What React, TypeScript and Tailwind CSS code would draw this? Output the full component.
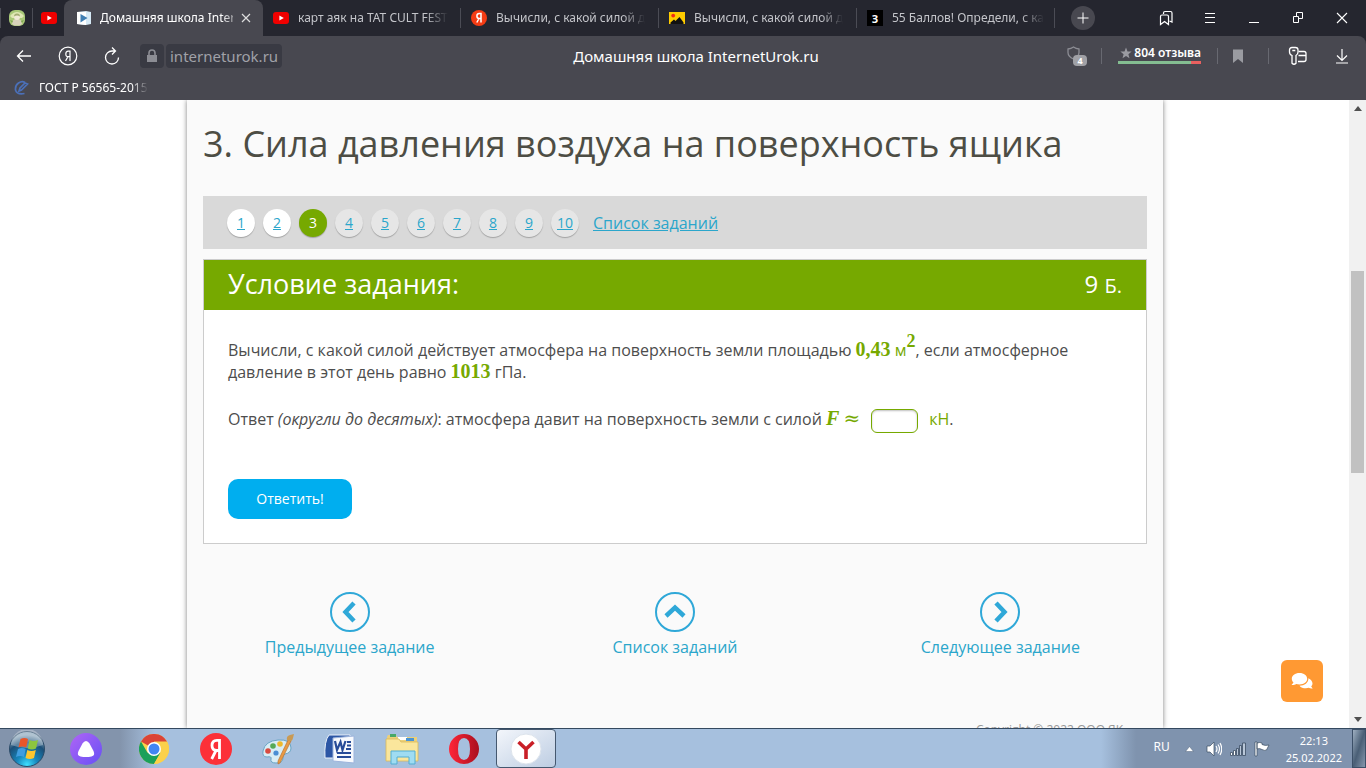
import React from "react";

const UI = "font-['Noto_Sans','Open_Sans',sans-serif]";

function YouTubeIcon() {
  return (
    <svg width="16" height="16" viewBox="0 0 16 16" aria-hidden="true" className="shrink-0">
      <rect y="2" width="16" height="12" rx="3" fill="#f00000" />
      <path d="M6.4 5.4v5.2L10.8 8z" fill="#fff" />
    </svg>
  );
}

function MascotIcon() {
  return (
    <svg width="16" height="16" viewBox="0 0 16 16" aria-hidden="true" className="shrink-0">
      <rect width="16" height="16" rx="6" fill="#a9c978" />
      <path d="M1 6Q8-2 15 6L13 8H3z" fill="#dfe8b4" />
      <path d="M3 14q0-5 5-5t5 5l-2 1.500H5z" fill="#d8d2bc" />
      <circle cx="8" cy="7" r="3" fill="#f0ead6" />
      <path d="M5 6.500q0-3 3-3t3 3q-3-2-6 0z" fill="#a3ad72" />
      <path d="M1 10l3 1-1 2zM15 10l-3 1 1 2z" fill="#7fa552" />
    </svg>
  );
}

function SchoolIcon() {
  return (
    <svg width="16" height="16" viewBox="0 0 16 16" aria-hidden="true" className="shrink-0">
      <path d="M1 2l9-1 5 1v12l-5 1-9-1z" fill="#d6eaf6" />
      <path d="M1 2l9 0v13l-9-1z" fill="#fff" />
      <path d="M4.500 4v8.500L11.500 8z" fill="#3f7fb3" />
    </svg>
  );
}

function YandexRound() {
  return (
    <svg width="16" height="16" viewBox="0 0 16 16" aria-hidden="true" className="shrink-0">
      <circle cx="8" cy="8" r="8" fill="#f43c14" />
      <path d="M10 12.500v-9H8.300Q5.900 3.500 5.900 6t2.300 2.500H10M8 8.500l-2.200 4" fill="none" stroke="#fff" strokeWidth="1.500" />
    </svg>
  );
}

function PictureIcon() {
  return (
    <svg width="16" height="16" viewBox="0 0 16 16" aria-hidden="true" className="shrink-0">
      <path d="M0 2h16v12H0z" fill="#fc0" />
      <path d="M1.500 14v-1.500L5 9.500l1.500 1.500L10.500 7l4 5.500V14z" fill="#111" />
      <circle cx="4.200" cy="5.600" r="1.900" fill="#f22a17" />
    </svg>
  );
}

function ZnanijaIcon() {
  return (
    <span className="flex size-4 shrink-0 items-center justify-center bg-black text-[11px] font-bold leading-none text-white">З</span>
  );
}

const backgroundTabs = [
  { title: "карт аяк на TAT CULT FEST", icon: <YouTubeIcon /> },
  { title: "Вычисли, с какой силой д", icon: <YandexRound /> },
  { title: "Вычисли, с какой силой д", icon: <PictureIcon /> },
  { title: "55 Баллов! Определи, с ка", icon: <ZnanijaIcon /> },
];

const fade = "[mask-image:linear-gradient(to_right,black_85%,transparent)]";

function TabStrip() {
  return (
    <div className="flex h-9 items-center bg-[#25262f] text-xs text-[#c4c5ca]">
      <button aria-label="Закреплённая вкладка" className="flex h-5 w-8 items-center justify-center border-l border-[#4b4c55]">
        <MascotIcon />
      </button>
      <button aria-label="YouTube" className="flex h-5 w-8 items-center justify-center border-l border-[#4b4c55]">
        <YouTubeIcon />
      </button>
      <div className="flex h-9 min-w-0 max-w-[199px] flex-1 items-center gap-2 rounded-t-lg bg-[#484850] pl-3 pr-3 text-white">
        <SchoolIcon />
        <span className="min-w-0 flex-1 overflow-hidden whitespace-nowrap">
          <span className={fade}>Домашняя школа Intern</span>
        </span>
        <button aria-label="Закрыть вкладку">
          <svg width="10" height="10" viewBox="0 0 10 10" stroke="#ddd" strokeWidth="1.200"><path d="M1 1l8 8M9 1l-8 8" /></svg>
        </button>
      </div>
      {backgroundTabs.map((tab, i) => (
        <button key={i} className="flex h-5 min-w-0 max-w-[198px] flex-1 items-center gap-[9px] border-r border-[#4b4c55] pl-[10px] pr-2 text-left">
          {tab.icon}
          <span className="min-w-0 flex-1 overflow-hidden whitespace-nowrap">
            <span className={fade}>{tab.title}</span>
          </span>
        </button>
      ))}
      <button aria-label="Новая вкладка" className="ml-4 flex size-6 shrink-0 items-center justify-center rounded-full bg-[#484850]">
        <svg width="12" height="12" viewBox="0 0 12 12" stroke="#fff" strokeWidth="1"><path d="M6 .500v11M.500 6h11" /></svg>
      </button>
      <div className="ml-auto flex items-center gap-7 pr-4 text-white">
        <button aria-label="Закладки">
          <svg width="16" height="16" viewBox="0 0 16 16" fill="none" stroke="currentColor" strokeWidth="1.200">
            <path d="M5.500 4V3q0-1.500 1.500-1.500h5.500Q14 1.500 14 3v9l-2.500-1" />
            <path d="M2.500 14.500V6.500Q2.500 5 4 5h5q1.500 0 1.500 1.500v8l-4-3z" />
          </svg>
        </button>
        <button aria-label="Меню">
          <svg width="16" height="16" viewBox="0 0 16 16" stroke="currentColor"><path d="M3 3.500h10M3 7.500h10M3 12.500h10" /></svg>
        </button>
        <button aria-label="Свернуть">
          <svg width="16" height="16" viewBox="0 0 16 16" stroke="currentColor"><path d="M3 12.500h10" /></svg>
        </button>
        <button aria-label="Восстановить">
          <svg width="16" height="16" viewBox="0 0 16 16" fill="none" stroke="currentColor"><path d="M6.500 6.500v-4h6v6h-4M3.500 6.500h5v6h-5z" /></svg>
        </button>
        <button aria-label="Закрыть">
          <svg width="16" height="16" viewBox="0 0 16 16" stroke="currentColor" strokeWidth="1.100"><path d="M3 3l10 10M13 3L3 13" /></svg>
        </button>
      </div>
    </div>
  );
}

function Toolbar() {
  return (
    <div className="bg-[#25262f]">
      <div className="grid h-10 grid-cols-[1fr_auto_1fr] items-center rounded-t-lg bg-[#484850] text-white">
        <div className="flex items-center pl-4">
          <button aria-label="Назад">
            <svg width="16" height="16" viewBox="0 0 16 16" fill="none" stroke="currentColor" strokeWidth="1.300"><path d="M15 8H1.500M7 2.500L1.500 8 7 13.500" /></svg>
          </button>
          <button aria-label="Яндекс" className="ml-[26px]">
            <svg width="20" height="20" viewBox="0 0 20 20" fill="none" stroke="currentColor" strokeWidth="1.200">
              <circle cx="10" cy="10" r="8.800" />
              <path d="M12 15V5.200h-1.700Q7.800 5.200 7.800 8t2.500 2.600H12M10 10.600L7.500 15" />
            </svg>
          </button>
          <button aria-label="Обновить" className="ml-[26px]">
            <svg width="16" height="18" viewBox="0 0 16 18" fill="none" stroke="currentColor" strokeWidth="1.300">
              <path d="M14.500 10.500A6.500 6.500 0 1 1 8 4h3.500M8 .500L11.500 4 8 7.500" />
            </svg>
          </button>
          <button aria-label="Защищённое соединение" className="ml-5 flex h-6 w-6 items-center justify-center rounded bg-[#393a43]">
            <svg width="12" height="14" viewBox="0 0 12 14"><path d="M1 6h10v7H1z" fill="#8c8d94" /><path d="M3 6.500V4a3 3 0 0 1 6 0v2.500" fill="none" stroke="#8c8d94" strokeWidth="1.600" /></svg>
          </button>
          <button className="ml-[2px] h-6 rounded bg-[#393a43] px-1 text-[15px] leading-6 text-[#a0a1a8]">interneturok.ru</button>
        </div>
        <h1 className="pl-[26px] text-[15px]">Домашняя школа InternetUrok.ru</h1>
        <div className="flex items-center justify-end pr-4">
          <button aria-label="Защита: 4" className="relative flex h-5 w-5 items-start">
            <svg width="13" height="14" viewBox="0 0 13 14" fill="none" stroke="#8c8d94" strokeWidth="1.300"><path d="M6.500 1Q9 2.800 12 3v3.500q0 4-5.500 6.500Q1 10.500 1 6.500V3q3-.200 5.500-2z" /></svg>
            <span className="absolute left-[6px] top-[9px] h-[11px] w-[14px] rounded-sm bg-[#a0a1a6] text-center text-[9px] font-bold leading-[11px]">4</span>
          </button>
          <span className="ml-[14px] h-4 w-px bg-[#686971]" />
          <button className="ml-4 w-[83px] pb-[3px]">
            <span className="flex items-center justify-between whitespace-nowrap text-xs font-semibold leading-4">
              <svg width="12" height="12" viewBox="0 0 12 12" fill="#9a9ba1" className="ml-[2px]"><path d="M6 .500l1.500 3.900 4.100.200-3.200 2.600 1.100 4L6 9l-3.500 2.200 1.100-4L.400 4.600l4.100-.200z" /></svg>
              804 отзыва
            </span>
            <span className="flex h-[3px]"><i className="flex-1 bg-[#84bd91]" /><i className="w-[10px] bg-[#e9605f]" /></span>
          </button>
          <span className="ml-4 h-4 w-px bg-[#686971]" />
          <button aria-label="В закладки" className="ml-[14px]">
            <svg width="12" height="14" viewBox="0 0 12 14" fill="#9a9ba1"><path d="M1 .500h10V14l-5-4-5 4z" /></svg>
          </button>
          <span className="ml-6 h-4 w-px bg-[#686971]" />
          <button aria-label="Пароли и карты" className="ml-[19px]">
            <svg width="20" height="20" viewBox="0 0 20 20" fill="none" stroke="currentColor" strokeWidth="1.300">
              <path d="M4 17.200V9.500Q1.500 8.500 1.500 6V4q0-2.500 2.500-2.500h3.500Q10 1.500 10 4v2q0 2.500-2 3.500v7.700q-2 2-4 0zM4.300 4.500h3" />
              <path d="M10.500 5.500h5.500q2 0 2 2v6q0 2-2 2H10M10.500 9.500H18" />
            </svg>
          </button>
          <button aria-label="Загрузки" className="ml-[26px]">
            <svg width="16" height="16" viewBox="0 0 16 16" fill="none" stroke="currentColor" strokeWidth="1.200"><path d="M8 1v11M3 7.500l5 5 5-5M2 15h12" /></svg>
          </button>
        </div>
      </div>
    </div>
  );
}

function BookmarksBar() {
  return (
    <div className="flex h-6 items-center bg-[#484850] pl-[14px] text-xs text-white">
      <a href="#gost" className="flex items-center gap-[10px]">
        <svg width="15" height="16" viewBox="0 0 15 16" fill="none" stroke="#4b70b8" strokeWidth="1.700" className="shrink-0">
          <path d="M11 2.500Q8 .500 4.500 3T1.500 10q1.500 5 9 3.500M5 11l1-3 5-5 2.500 1-6 6z" />
        </svg>
        <span className={`whitespace-nowrap ${fade}`}>ГОСТ Р 56565-2015</span>
      </a>
    </div>
  );
}

function TaskNumber({ n }: { n: number }) {
  const base = "flex size-7 items-center justify-center rounded-full text-sm shadow-[0_1px_1px_rgba(0,0,0,0.25)] ";
  if (n === 3) return <span aria-current="page" className={base + "bg-[#76a900] text-white"}>{n}</span>;
  return (
    <a href={`#task-${n}`} className={base + "text-[#2ba6cb] underline " + (n < 3 ? "bg-white" : "bg-[#e6e6e6]")}>{n}</a>
  );
}

const directions = [
  { label: "Предыдущее задание", d: "M24 11l-8.500 9 8.500 9" },
  { label: "Список заданий", d: "M11 24l9-8.500 9 8.500" },
  { label: "Следующее задание", d: "M16 11l8.500 9-8.500 9" },
];

const mathClass = "font-['Liberation_Serif',serif] text-xl leading-none text-[#76a900]";

function Lesson() {
  return (
    <main className="w-full max-w-[976px] bg-[#fafafa] font-['Open_Sans','Noto_Sans',sans-serif] text-[#4d4d4d] shadow-[0_0_5px_rgba(0,0,0,0.5)]">
      <div className="px-4 pt-[18px]">
        <h2 className="whitespace-nowrap text-[36px] leading-[52px] text-[#4d4d44]">3. Сила давления воздуха на поверхность ящика</h2>
        <nav className="mt-[26px] flex h-[53px] items-center gap-2 bg-[#d9d9d9] px-6">
          {[1, 2, 3, 4, 5, 6, 7, 8, 9, 10].map((n) => <TaskNumber key={n} n={n} />)}
          <a href="#list" className="ml-[6px] text-base leading-[22px] text-[#2ba6cb] underline">Список заданий</a>
        </nav>
        <section className="mt-[10px] border border-[#ccc] bg-white">
          <header className="flex h-[50px] items-center justify-between bg-[#76a900] px-6 pb-[2px] text-white">
            <h3 className="text-[27px]">Условие задания:</h3>
            <span className="text-2xl">9 <span className="text-xl">Б.</span></span>
          </header>
          <div className="px-6 pb-6 pt-[29px] text-base leading-[22px]">
            <p>
              Вычисли, с какой силой действует атмосфера на поверхность земли площадью{" "}
              <span className="whitespace-nowrap"><span className={mathClass + " font-bold"}>0,43</span>{" "}
              <span className="text-[#76a900]">м<sup className="font-['Liberation_Serif',serif] text-lg font-bold leading-none">2</sup></span>,</span> если атмосферное
              давление в этот день равно <span className={mathClass + " font-bold"}>1013</span> гПа.
            </p>
            <form onSubmit={(e) => e.preventDefault()}>
              <div className="mt-[25px]">
                <label htmlFor="answer">
                  Ответ <em>(округли до десятых)</em>: атмосфера давит на поверхность земли с силой{" "}
                  <span className={mathClass + " font-bold italic"}>F</span>{" "}
                  <span className="font-['DejaVu_Serif',serif] text-xl leading-none text-[#76a900]">≈</span>
                </label>
                <input id="answer" className="mx-[11px] h-6 w-[47px] rounded-md border border-[#76a900] bg-white px-1 align-middle shadow-[inset_0_1px_2px_rgba(0,0,0,0.25)]" />
                <span className="text-[#76a900]">кН</span>.
              </div>
              <button className="mt-[46px] h-10 w-[124px] rounded-[10px] bg-[#00aeef] text-sm text-white">Ответить!</button>
            </form>
          </div>
        </section>
      </div>
      <nav className="mt-12 grid grid-cols-3 text-base text-[#2ba6cb]">
        {directions.map((item) => (
          <a key={item.label} href="#nav" className="flex flex-col items-center gap-1">
            <svg width="40" height="40" viewBox="0 0 40 40" fill="none" stroke="#2fa8d8" aria-hidden="true">
              <circle cx="20" cy="20" r="19" strokeWidth="2" />
              <path d={item.d} strokeWidth="4.500" />
            </svg>
            <span className="leading-[22px]">{item.label}</span>
          </a>
        ))}
      </nav>
      <footer className="mt-16 pb-10 pr-10 text-right text-xs leading-4 text-[#999]">Copyright © 2022 ООО ЯК</footer>
    </main>
  );
}

function Scrollbar() {
  return (
    <div aria-hidden="true" className="flex w-[17px] shrink-0 flex-col items-center justify-between bg-[#f1f1f1] py-[6px]">
      <svg width="8" height="5" viewBox="0 0 8 5" fill="#505050"><path d="M0 5l4-5 4 5z" /></svg>
      <div className="flex w-full flex-1 flex-col px-[2px]">
        <div className="flex-[160]" />
        <div className="flex-[202] bg-[#c1c1c1]" />
        <div className="flex-[244]" />
      </div>
      <svg width="8" height="5" viewBox="0 0 8 5" fill="#505050"><path d="M0 0l4 5 4-5z" /></svg>
    </div>
  );
}

function StartIcon() {
  return (
    <svg width="38" height="38" viewBox="0 0 38 38" aria-hidden="true">
      <defs>
        <radialGradient id="orb" cx="50%" cy="95%" r="85%">
          <stop offset="0" stopColor="#3fe0ff" /><stop offset=".35" stopColor="#1787bd" /><stop offset=".75" stopColor="#1b4f78" /><stop offset="1" stopColor="#8fa9bd" />
        </radialGradient>
      </defs>
      <circle cx="19" cy="19" r="17.500" fill="url(#orb)" stroke="#2b4b68" />
      <path d="M3 15a16 16 0 0 1 32 0q-16 6-32 0z" fill="#fff" opacity=".3" />
      <path d="M12.500 9q4-2 7.500 0l-1.800 8.500q-4-2-7.700 0z" fill="#e8562a" />
      <path d="M21.500 10q4 2 8.500 0L28 18.500q-4 2-8.300 0z" fill="#8cc63f" />
      <path d="M10 19q4-2 7.700 0L16 27q-4-2-8 0z" fill="#3f9de0" />
      <path d="M19.300 20q4 2 8.500 0L26 28q-4 2-8.500 0z" fill="#fdc62e" />
    </svg>
  );
}

function AliceIcon() {
  return (
    <svg width="32" height="32" viewBox="0 0 32 32" aria-hidden="true">
      <defs><linearGradient id="alice" x1="0" y1="0" x2="1" y2="1"><stop stopColor="#b065f5" /><stop offset="1" stopColor="#6650f5" /></linearGradient></defs>
      <circle cx="16" cy="16" r="16" fill="url(#alice)" />
      <path d="M16 8q2 0 3.500 2.500l4 7.500q2 4.500-2 5.500-5.500 1-11 0-4-1-2-5.500l4-7.500Q14 8 16 8z" fill="#fff" />
    </svg>
  );
}

function ChromeIcon() {
  return (
    <svg width="30" height="30" viewBox="0 0 30 30" aria-hidden="true">
      <circle cx="15" cy="15" r="15" fill="#fbd14b" />
      <path d="M15 15L2 7.500A15 15 0 0 1 28 7.500H15z" fill="#db4437" />
      <path d="M2 7.500A15 15 0 0 0 15 30l6.500-11.200L15 15 8.500 18.800z" fill="#1ba05a" />
      <path d="M15 8h13.300A15 15 0 0 1 15 30l6.500-11.200z" fill="#fbd14b" />
      <circle cx="15" cy="15" r="7" fill="#fff" /><circle cx="15" cy="15" r="5.500" fill="#4285f4" />
    </svg>
  );
}

function YandexIcon() {
  return (
    <svg width="32" height="32" viewBox="0 0 32 32" aria-hidden="true">
      <circle cx="16" cy="16" r="16" fill="#fc3038" />
      <path d="M19.500 26V7.300h-2.700q-4.800 0-4.800 5.200 0 5 4.800 5h2.700M16 17.500L11.700 26" fill="none" stroke="#fff" strokeWidth="2.800" />
    </svg>
  );
}

function PaintIcon() {
  return (
    <svg width="34" height="34" viewBox="0 0 34 34" aria-hidden="true">
      <path d="M2 19Q4 9 17 8t13 8q0 5-6 6-3 1-2 4 0 5-7 5-6 0-5-4 1-3-4-2-5 0-4-6z" fill="#d9edf5" stroke="#6aa5c5" />
      <circle cx="7" cy="19" r="2.800" fill="#d94b40" /><circle cx="12" cy="14" r="2.800" fill="#55a956" />
      <circle cx="19" cy="12" r="2.800" fill="#edb92e" /><circle cx="15" cy="21" r="2.600" fill="#4b8ed4" />
      <path d="M27 8l3 1-11 22-2 1 0-3z" fill="#e99a45" stroke="#b26b28" strokeWidth=".600" />
      <path d="M26 8q-1-4 3-5l4-1-1 4q-1 4-4 3z" fill="#c99a54" />
    </svg>
  );
}

function WordIcon() {
  return (
    <svg width="32" height="32" viewBox="0 0 32 32" aria-hidden="true">
      <path d="M1 25Q0 8 5 2h21v23z" fill="#2c56a5" stroke="#eaf1fb" />
      <path d="M9 5l21-2v27l-21-2z" fill="#f7f9fd" stroke="#9db4dc" />
      <path d="M11 8l2 9 3.500-8 2 8 3-9" fill="none" stroke="#274b98" strokeWidth="2.200" />
      <path d="M23 9h4M23 12.500h4M22 16h5M13 20h14M13 24h14" stroke="#274b98" strokeWidth="1.800" />
    </svg>
  );
}

function FolderIcon() {
  return (
    <svg width="34" height="32" viewBox="0 0 34 32" aria-hidden="true">
      <path d="M2 4l1-2h8l1 2h20v24H2z" fill="#ecd07a" />
      <path d="M5 1h6v3H5z" fill="#48a867" /><path d="M13 4h9v3h-9z" fill="#fff" /><path d="M21 5h8v3h-8z" fill="#4b95d4" />
      <path d="M1 6h13l2 3h17v19H1z" fill="#fae69c" stroke="#d9b95a" strokeWidth=".800" />
      <path d="M6 31V18h24v13h-6v-7H12v7z" fill="#9fdcf2" stroke="#53aed3" />
    </svg>
  );
}

function OperaIcon() {
  return (
    <svg width="32" height="32" viewBox="0 0 32 32" aria-hidden="true">
      <defs><linearGradient id="opera" x1="0" y1="0" x2="1" y2="0"><stop stopColor="#ff2638" /><stop offset="1" stopColor="#a9101f" /></linearGradient></defs>
      <path fillRule="evenodd" d="M16 1a15 15 0 1 0 0 30 15 15 0 1 0 0-30zm0 4q6 0 6 11t-6 11-6-11 6-11z" fill="url(#opera)" />
    </svg>
  );
}

function YandexBrowserIcon() {
  return (
    <svg width="32" height="32" viewBox="0 0 32 32" aria-hidden="true">
      <circle cx="16" cy="16" r="15" fill="#fff" stroke="#dde4ec" />
      <path d="M8.500 9l7.500 7 7.500-7M16 16v10" fill="none" stroke="#c91f27" strokeWidth="3.600" />
    </svg>
  );
}

const pinned = [
  { name: "Алиса", icon: <AliceIcon />, box: "w-[66px]" },
  { name: "Google Chrome", icon: <ChromeIcon />, box: "ml-1 w-[62px]" },
  { name: "Яндекс", icon: <YandexIcon />, box: "w-[62px]" },
  { name: "Paint", icon: <PaintIcon />, box: "w-[62px]" },
  { name: "Word", icon: <WordIcon />, box: "w-[62px]" },
  { name: "Проводник", icon: <FolderIcon />, box: "w-[62px]" },
  { name: "Opera", icon: <OperaIcon />, box: "w-[62px]" },
];

function Taskbar() {
  return (
    <footer className="flex h-10 shrink-0 items-center border-t border-[#34495f] bg-[linear-gradient(to_right,#8394ac_0,#8394ac_120px,#a6c0de_155px,#a6c0de_calc(100%_-_265px),#7f93ae_calc(100%_-_230px),#7f93ae_100%)] text-white">
      <button aria-label="Пуск" className="ml-2 mr-[7px]"><StartIcon /></button>
      <div className="flex items-center">
        {pinned.map((app) => (
          <button key={app.name} aria-label={app.name} className={`flex shrink-0 items-center justify-center ${app.box}`}>{app.icon}</button>
        ))}
        <button aria-label="Яндекс.Браузер" className="ml-[1px] flex h-[39px] w-[60px] items-center justify-center rounded-sm border border-[#45586f] bg-linear-to-br from-[#f3f6fb] to-[#bdcde2]">
          <YandexBrowserIcon />
        </button>
      </div>
      <div className="ml-auto flex h-full items-center">
        <span className="pb-1 text-xs">RU</span>
        <button aria-label="Скрытые значки" className="ml-[15px]">
          <svg width="9" height="6" viewBox="0 0 9 6" fill="#fff" stroke="#53657c" strokeWidth=".500"><path d="M.500 5.500l4-5 4 5z" /></svg>
        </button>
        <button aria-label="Громкость" className="ml-3">
          <svg width="16" height="16" viewBox="0 0 16 16" fill="#fff" stroke="#3b4d62" strokeWidth=".700">
            <path d="M1 5h3l4-4v14l-4-4H1z" /><path d="M10 5q2 3 0 6M12 3.500q3 4.500 0 9M14 2q3.500 6 0 12" fill="none" stroke="#fff" strokeWidth="1.200" />
          </svg>
        </button>
        <button aria-label="Сеть" className="ml-2">
          <svg width="16" height="14" viewBox="0 0 16 14" fill="#b9c7d8" stroke="#3b4d62" strokeWidth=".800">
            <path d="M.500 10.500h2v3h-2zM3.500 8.500h2v5h-2z" fill="#fff" /><path d="M6.500 6.500h2v7h-2zM9.500 3.500h2v10h-2zM12.500 1h3v12.500h-3z" />
          </svg>
        </button>
        <button aria-label="Центр поддержки" className="ml-2">
          <svg width="16" height="16" viewBox="0 0 16 16" fill="#fff" stroke="#3b4d62" strokeWidth=".700"><path d="M1 1h2v14H1zM3 2q3-1 5 0v1.500q3 1.500 7 .500l-2.500 5q-2 1-4.500-.500Q5.500 7 3 8z" /></svg>
        </button>
        <div className="ml-4 whitespace-nowrap text-center text-[11px] leading-[17px]"><div>22:13</div><div>25.02.2022</div></div>
        <button aria-label="Свернуть все окна" className="ml-[10px] h-full w-[14px] border border-[#3c5068] bg-linear-to-br from-[#9fb0c2] via-[#4a5f76] to-[#8798ad]" />
      </div>
    </footer>
  );
}

export default function App() {
  return (
    <div className={`flex h-screen flex-col overflow-hidden bg-white ${UI}`}>
      <div className="shrink-0"><TabStrip /><Toolbar /><BookmarksBar /></div>
      <div className="relative flex min-h-0 flex-1">
        <div className="flex min-w-0 flex-1 justify-center overflow-hidden pl-px"><Lesson /></div>
        <Scrollbar />
        <button aria-label="Чат" className="absolute bottom-[26px] right-[43px] flex size-[42px] items-center justify-center rounded-md bg-[#ff9933]">
          <svg width="22" height="18" viewBox="0 0 22 18" fill="#fff">
            <path d="M8.500 1C4 1 .800 3.500.800 6.800c0 1.500.600 2.800 1.700 3.800L.500 13c2 .200 3.500-.300 4.700-1 1 .300 2.200.500 3.300.500 4.500 0 7.700-2.500 7.700-5.700S13 1 8.500 1z" />
            <path d="M17.400 6.200c.200 4.400-3.900 7.500-8.900 7.500 1.300 1.800 3.700 2.600 6.400 2.600 1 0 2-.200 2.800-.500 1.200.700 2.500 1 4 .700l-1.500-2c.800-.800 1.300-1.900 1.300-3 0-2.300-1.600-4.300-4.100-5.300z" />
          </svg>
        </button>
      </div>
      <Taskbar />
    </div>
  );
}
